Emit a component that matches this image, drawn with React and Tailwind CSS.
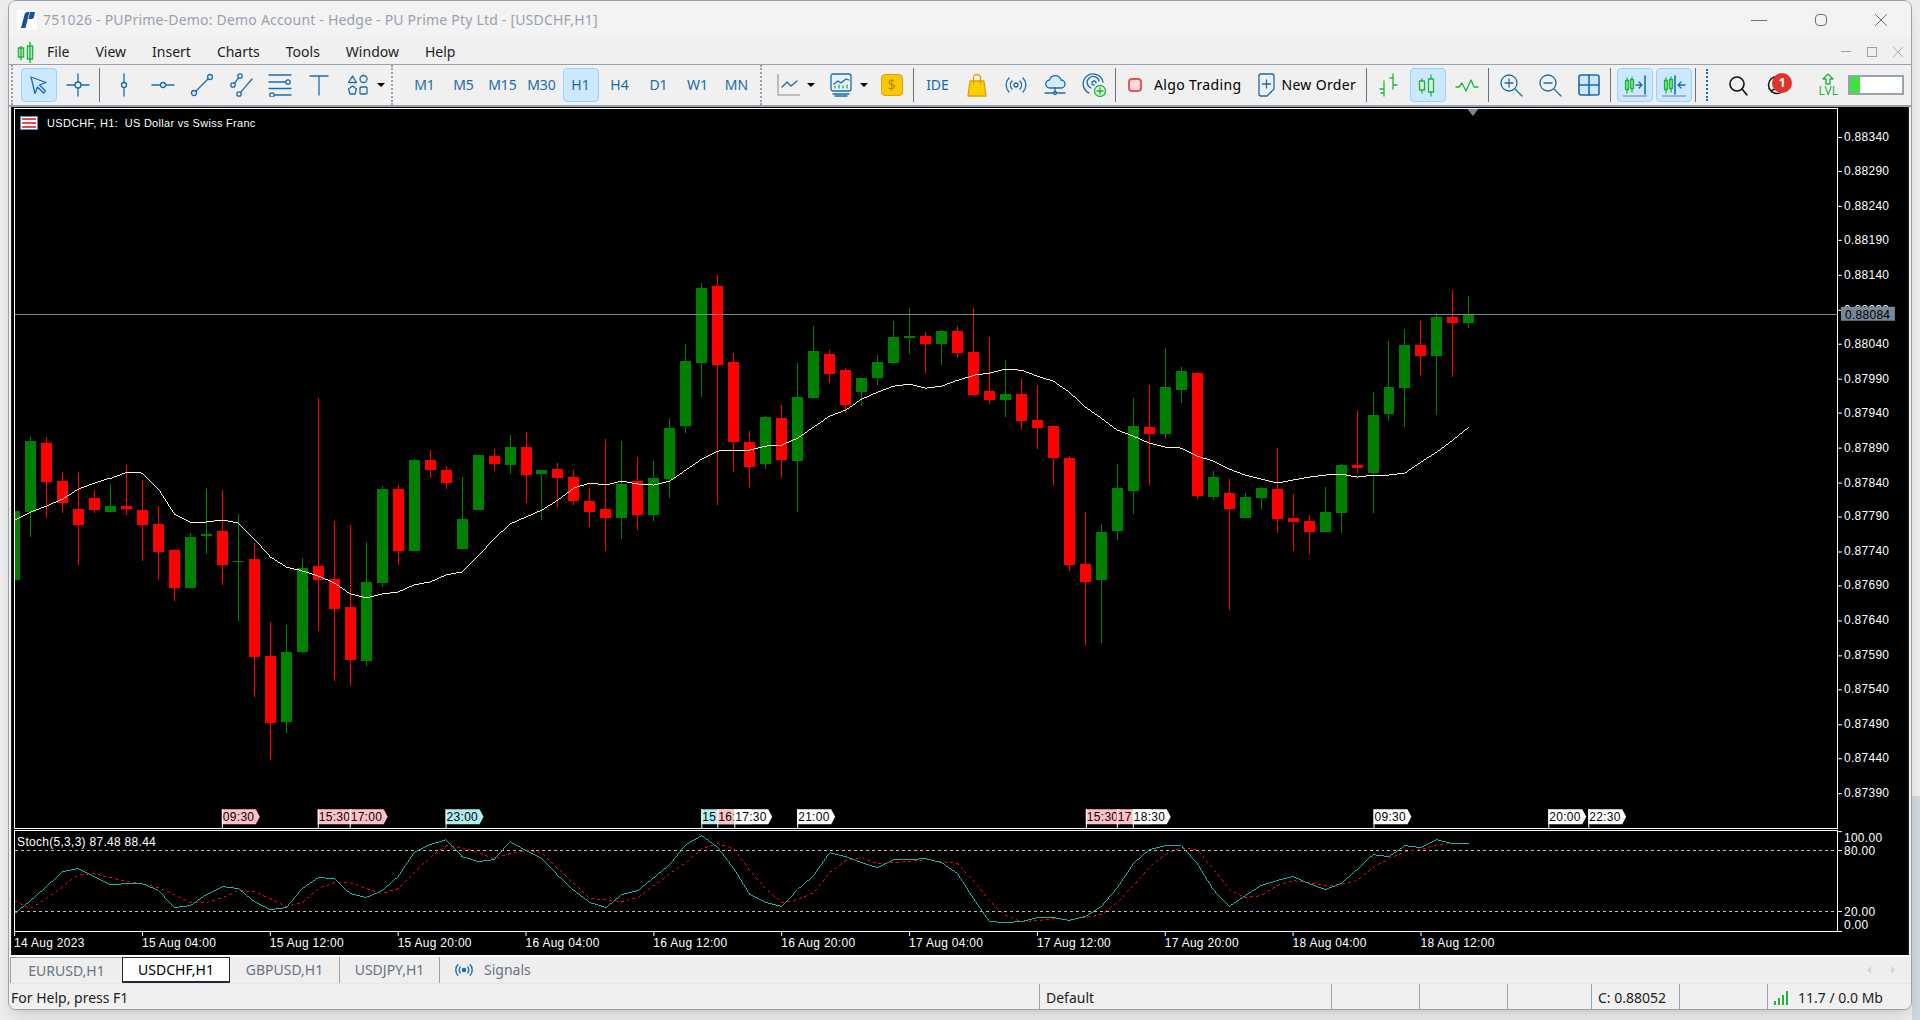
import React from "react";

const candles = [
  ["g",510,510,580,580],["g",435,440,511,537],["r",436,442,481,517],["r",471,480,502,512],["r",471,508,524,565],["r",489,497,509,512],["g",483,505,511,511],["r",464,505,508,514],["r",479,509,524,561],["r",505,523,552,580],
  ["r",549,550,588,601],["g",533,537,588,588],["g",487,534,536,554],["r",489,530,565,585],["g",513,561,562,621],["r",543,559,657,697],["r",622,656,723,760],["g",625,652,722,733],["g",558,568,652,653],["r",397,566,580,631],
  ["r",520,579,609,681],["r",524,607,660,686],["g",542,582,661,666],["g",485,488,583,587],["r",483,488,551,565],["g",458,459,551,551],["r",449,459,469,477],["r",465,469,482,488],["g",476,518,549,549],["g",454,454,509,509],
  ["r",448,455,463,470],["g",434,446,464,473],["r",431,446,474,502],["g",469,469,473,519],["r",462,468,477,506],["r",469,476,500,504],["r",487,500,511,526],["r",438,508,517,551],["g",440,483,517,539],["r",456,480,514,529],
  ["g",460,477,514,520],["g",417,427,478,497],["g",343,360,425,432],["g",282,287,362,396],["r",273,285,364,504],["r",352,361,441,471],["r",430,441,466,487],["g",415,416,463,468],["r",404,417,459,477],["g",362,396,460,511],
  ["g",325,350,397,398],["r",349,353,373,382],["r",367,369,404,412],["g",376,377,391,405],["g",354,361,377,384],["g",320,336,362,363],["g",307,335,337,353],["r",331,335,343,373],["g",329,330,343,364],["r",325,330,352,357],
  ["r",307,351,394,394],["r",336,390,399,403],["g",359,393,399,416],["r",377,393,420,429],["r",384,419,427,448],["r",424,425,457,485],["r",455,457,565,571],["r",511,564,582,646],["g",523,532,580,643],["g",463,487,530,540],
  ["g",397,425,490,513],["r",384,426,433,485],["g",347,386,433,438],["g",366,370,389,402],["r",371,372,495,498],["g",470,476,496,499],["r",478,492,508,610],["g",492,496,517,517],["g",486,487,497,509],["r",447,488,518,533],
  ["r",493,517,521,551],["r",514,520,532,554],["g",486,511,532,532],["g",463,464,512,533],["r",409,464,467,472],["g",391,414,472,512],["g",340,386,413,420],["g",328,344,387,426],["r",320,344,355,374],["g",312,316,355,414],
  ["r",289,316,322,376],["g",295,313,322,327],
];

const ma = [519,511,505,498,488,482,477,471,472,488,513,521,521,519,522,538,556,566,570,575,582,593,597,593,591,584,581,574,571,555,538,
  523,516,509,499,487,482,484,480,483,484,480,469,458,450,449,449,445,444,437,426,415,409,398,391,385,383,387,385,379,374,372,
  368,369,375,380,391,406,417,429,435,442,446,447,455,460,468,474,478,482,479,476,474,473,476,474,474,472,461,451,439,426];

const teal = [913,900,886,871,868,876,884,883,883,890,907,905,894,886,888,901,909,907,888,877,878,893,897,890,876,852,844,839,856,861,859,841,850,858,875,890,902,907,894,890,
  877,864,844,835,847,868,894,902,906,889,
  875,852,856,862,867,859,859,858,862,873,898,921,922,921,917,917,920,916,906,887,863,849,845,845,863,889,906,895,885,880,876,883,889,883,869,854,856,845,847,839,843,843];

const redLine = [900,908,898,886,874,873,877,881,883,887,894,902,902,897,890,891,898,906,902,888,882,882,888,893,888,872,857,845,847,852,858,853,850,852,868,883,898,899,901,897,
  885,873,862,848,843,848,870,888,902,899,
  892,872,860,857,863,862,861,859,861,863,880,900,915,921,920,918,919,917,914,902,885,867,854,847,849,868,889,897,895,885,880,882,885,884,880,867,858,851,849,844,843,843];

const toPts = (a) => a.map((y, k) => `${13.5 + 16 * k},${y + 0.5}`).join(" ");

const prices = ["0.88340","0.88290","0.88240","0.88190","0.88140","0.88090","0.88040","0.87990","0.87940","0.87890","0.87840","0.87790","0.87740","0.87690","0.87640","0.87590","0.87540","0.87490","0.87440","0.87390"];
const times = ["14 Aug 2023","15 Aug 04:00","15 Aug 12:00","15 Aug 20:00","16 Aug 04:00","16 Aug 12:00","16 Aug 20:00","17 Aug 04:00","17 Aug 12:00","17 Aug 20:00","18 Aug 04:00","18 Aug 12:00"];
const P = "#ffc0cb", C = "#afeeee", W = "#ffffff";
const tags = [[221,"09:30",P],[317,"15:30",P],[349,"17:00",P],[445,"23:00",C],[701,"15:00",C],[717,"16:00",P],[734,"17:30",W],[797,"21:00",W],[1086,"15:30",P],[1117,"17:00",P],[1133,"18:30",W],[1374,"09:30",W],[1549,"20:00",W],[1589,"22:30",W]];

function Chart() {
  return (
    <svg viewBox="10 106 1900 849" className="block h-full w-full font-['Liberation_Sans',sans-serif] text-xs tracking-wide">
      <rect x="10" y="106" width="1900" height="849" fill="#000" />
      <rect x="13" y="108" width="1826" height="720" fill="none" stroke="#fff" shapeRendering="crispEdges" />
      <rect x="13" y="830" width="1826" height="101" fill="none" stroke="#fff" shapeRendering="crispEdges" />

      <g shapeRendering="crispEdges">
        {candles.map(([c, hi, top, bot, lo], k) => {
          const col = c === "g" ? "#008000" : "#ff0000";
          const left = Math.max(14, 8 + 16 * k);
          const right = 19 + 16 * k;
          return (
            <g key={k}>
              {k > 0 && <rect x={13 + 16 * k} y={hi} width="1" height={lo - hi} fill={col} />}
              <rect x={left} y={top} width={right - left} height={Math.max(1, bot - top)} fill={col} />
            </g>
          );
        })}
        <polyline points={toPts(ma)} fill="none" stroke="#ffefd5" strokeWidth="1" />
        <line x1="14" x2="1839" y1="313.5" y2="313.5" stroke="#778899" />
        <line x1="14" x2="1839" y1="850.5" y2="850.5" stroke="#c0c0c0" strokeDasharray="3 3" />
        <line x1="14" x2="1839" y1="911.5" y2="911.5" stroke="#c0c0c0" strokeDasharray="3 3" />
        <polyline points={toPts(redLine)} fill="none" stroke="#ff0000" strokeWidth="1" strokeDasharray="3 3" />
        <polyline points={toPts(teal)} fill="none" stroke="#20b2aa" strokeWidth="1" />
      </g>

      <polygon points="1468,108 1479,108 1473.5,115" fill="#778899" />

      <g>
        <rect x="19.5" y="115.5" width="17" height="13" fill="#fff" stroke="#5b8fc7" />
        <rect x="21" y="117" width="14" height="2" fill="#e8474c" />
        <rect x="21" y="121" width="14" height="2" fill="#e8474c" />
        <rect x="21" y="125" width="14" height="2" fill="#e8474c" />
        <text x="46" y="126" fill="#fff" className="whitespace-pre text-[11px]">USDCHF, H1:  US Dollar vs Swiss Franc</text>
      </g>

      {prices.map((p, i) => {
        const y = Math.round(135.5 + i * 34.6);
        return (
          <g key={p}>
            <rect x="1839" y={y} width="4" height="1" fill="#fff" />
            <text x="1845" y={y + 4} fill="#fff">{p}</text>
          </g>
        );
      })}
      <rect x="1842" y="306" width="54" height="14" fill="#778899" />
      <text x="1846" y="318" fill="#000">0.88084</text>

      {tags.map(([x, t, col], i) => (
        <g key={i}>
          <polygon points={`${x},809 ${x + 34},809 ${x + 38},816.5 ${x + 34},824 ${x},824`} fill={col} />
          <rect x={x} y="809" width="1" height="19" fill="#fff" />
          <text x={x + 1} y="821" fill="#000">{t}</text>
        </g>
      ))}

      <text x="16" y="846" fill="#fff">Stoch(5,3,3) 87.48 88.44</text>
      {[[831, "100.00", 842],[850, "80.00", 855],[911, "20.00", 916],[931, "0.00", 929]].map(([y, t, b]) => (
        <g key={t}>
          <rect x="1839" y={y} width="4" height="1" fill="#fff" />
          <text x="1845" y={b} fill="#fff">{t}</text>
        </g>
      ))}
      {times.map((t, i) => {
        const x = 13 + 128 * i;
        return (
          <g key={t}>
            <rect x={x} y="931" width="1" height="5" fill="#fff" />
            <text x={x} y="947" fill="#fff">{t}</text>
          </g>
        );
      })}
    </svg>
  );
}

const B = "#1a6cad";
const G = "#1fb53a";

const Ico = ({ children, className = "h-6 w-6" }) => (
  <svg viewBox="0 0 24 24" className={className} fill="none" stroke={B} strokeWidth="1.3" strokeLinecap="round" strokeLinejoin="round">
    {children}
  </svg>
);

const Slot = ({ active, children }) => (
  <div className="flex h-full w-[39px] shrink-0 items-center justify-center">
    <div className={`flex h-8.5 w-9 items-center justify-center rounded-sm border text-sm text-[#1a6cad] ${active ? "border-[#99d1ff] bg-[#cce8ff]" : "border-transparent"}`}>
      {children}
    </div>
  </div>
);

const Sep = ({ className }) => <div className={`h-8.5 w-px shrink-0 bg-gray-500 ${className}`} />;
const Grip = ({ className }) => <div className={`h-full w-0.5 shrink-0 border-l-2 border-dotted border-gray-400 ${className}`} />;
const Caret = ({ className = "" }) => (
  <div className={`flex w-2 shrink-0 justify-center ${className}`}>
    <div className="h-0 w-0 border-x-4 border-t-4 border-x-transparent border-t-black" />
  </div>
);

const CandleIcon = ({ fill = "#d6f5dc" }) => (
  <g stroke={G} fill={fill}>
    <path d="M6 6v14M15 2v21" />
    <rect x="3.5" y="8" width="5" height="9" />
    <rect x="12.5" y="6" width="5" height="13" />
  </g>
);

const SmallCandles = () => (
  <g stroke={G} fill="#7fe08f">
    <path d="M4 5v15M9 4v15" />
    <rect x="2.5" y="7.5" width="3" height="9" />
    <rect x="7.5" y="6.5" width="3" height="9" />
  </g>
);

function Toolbar() {
  return (
    <div className="flex h-10.5 shrink-0 items-center border-b-2 border-gray-400 pl-0.5">
      <Grip className="mr-1.5" />
      <Slot active>
        <Ico><path d="M4 4l15 5.5-6.5 2.5 6 6-2 2-6-6-2.5 6.5z" /></Ico>
      </Slot>
      <Slot>
        <Ico><circle cx="12" cy="12" r="3" /><path d="M12 1v8M12 15v8M1 12h8M15 12h8" /></Ico>
      </Slot>
      <Sep className="ml-0.5 mr-1" />
      <Slot><Ico><circle cx="12" cy="12" r="2.5" /><path d="M12 1v8.5M12 14.5V23" /></Ico></Slot>
      <Slot><Ico><circle cx="12" cy="12" r="2.5" /><path d="M1 12h8.5M14.5 12H23" /></Ico></Slot>
      <Slot><Ico><circle cx="4" cy="20" r="2.5" /><circle cx="20" cy="4" r="2.5" /><path d="M5.8 18.2L18.2 5.8" /></Ico></Slot>
      <Slot><Ico><circle cx="11" cy="3" r="2.2" /><circle cx="4" cy="12" r="2.2" /><circle cx="10" cy="21" r="2.2" /><path d="M5.5 10.3L9.6 4.8M11.6 19.3L23 6" /></Ico></Slot>
      <Slot><Ico><path d="M1 2h22M1 9h16M1 15.5h22M7 22h16" /><circle cx="20" cy="9" r="2.2" /><circle cx="4" cy="22" r="2.2" /></Ico></Slot>
      <Slot><Ico><path d="M3 3h18M12 3v19" /></Ico></Slot>
      <Slot><Ico><path d="M6.5 3l4 6.5h-8z" /><circle cx="17.5" cy="6" r="3.5" /><path d="M6.5 13l4 3-1.5 5H4l-1.5-5z" /><rect x="14" y="14" width="7" height="7" rx="1" /></Ico></Slot>
      <Caret />
      <Grip className="ml-1.5 mr-3" />
      {["M1","M5","M15","M30","H1","H4","D1","W1","MN"].map((t) => (
        <Slot key={t} active={t === "H1"}>{t}</Slot>
      ))}
      <Grip className="ml-1 mr-1.5" />
      <Slot>
        <Ico>
          <path d="M2 2v20h22" stroke="#bdbdbd" strokeWidth="2" />
          <path d="M6 14l5-5 4 4 6-5" />
        </Ico>
      </Slot>
      <Caret />
      <div className="ml-1.5" />
      <Slot>
        <Ico>
          <rect x="2" y="1" width="20" height="17" rx="2" fill="#e6f3fb" />
          <path d="M5 11l4-3 3 2 5-4 3 1" />
          <path d="M6 15v-2M10 15v-3M14 15v-2M18 15v-3" stroke={G} />
          <path d="M4 21h16M6 23h12" />
        </Ico>
      </Slot>
      <Caret />
      <div className="ml-1" />
      <Slot>
        <div className="flex h-5.5 w-5.5 items-center justify-center rounded-sm border border-[#e0a100] bg-[#fcc800] text-sm text-[#b98600]">$</div>
      </Slot>
      <Sep className="ml-0.5 mr-1" />
      <Slot>IDE</Slot>
      <Slot>
        <Ico>
          <path d="M5 8h14l2 15H3z" fill="#fcd000" stroke="#e0a100" />
          <path d="M8.5 11V5a3.5 3.5 0 0 1 7 0v6" stroke="#e0a100" />
        </Ico>
      </Slot>
      <Slot>
        <Ico>
          <circle cx="12" cy="12" r="2" />
          <path d="M8 8a6 6 0 0 0 0 8M16 8a6 6 0 0 1 0 8M5 5a10 10 0 0 0 0 14M19 5a10 10 0 0 1 0 14" />
        </Ico>
      </Slot>
      <Slot>
        <Ico>
          <path d="M7 15a4 4 0 0 1-.5-8A6 6 0 0 1 18 7a4 4 0 0 1 0 8z" fill="#d5ebf8" />
          <path d="M12 15v5M2 20h8M14 20h8" />
          <circle cx="12" cy="20" r="1.5" />
        </Ico>
      </Slot>
      <Slot>
        <Ico>
          <path d="M7 20A10 10 0 1 1 21 9M9 15a6 6 0 1 1 8-7M12 12a2 2 0 1 1 2-2" />
          <circle cx="18" cy="18" r="5.5" fill="#d6f5dc" stroke={G} />
          <path d="M18 15v6M15 18h6" stroke={G} />
        </Ico>
      </Slot>
      <Sep className="ml-0.5 mr-1" />
      <div className="ml-2 h-3.5 w-3.5 shrink-0 rounded-sm border-2 border-[#e2575a] bg-[#ffd9d9]" />
      <span className="ml-3 text-sm tracking-wide whitespace-nowrap text-black">Algo Trading</span>
      <div className="ml-3.5 shrink-0">
        <Ico>
          <path d="M4 3a2 2 0 0 1 2-2h11a2 2 0 0 1 2 2v13l-7 7H6a2 2 0 0 1-2-2z" />
          <path d="M11.5 7v8M7.5 11h8" />
        </Ico>
      </div>
      <span className="ml-0.5 text-sm tracking-wide whitespace-nowrap text-black">New Order</span>
      <Sep className="ml-2.5 mr-0.5" />
      <Slot>
        <Ico>
          <g stroke={G}>
            <path d="M7 8v15M7 16H3M7 12h0M16 1v15M16 5h-3M16 12h4M7 20h-3" />
          </g>
        </Ico>
      </Slot>
      <Slot active><Ico><CandleIcon /></Ico></Slot>
      <Slot><Ico><path d="M1 14h3l3-4 4 8 5-11 3 7h4" stroke={G} /></Ico></Slot>
      <Sep className="ml-0.5 mr-0.5" />
      <Slot><Ico><circle cx="10" cy="10" r="8" /><path d="M16 16l7 7M10 6v8M6 10h8" /></Ico></Slot>
      <Slot><Ico><circle cx="10" cy="10" r="8" /><path d="M16 16l7 7M6 10h8" /></Ico></Slot>
      <Slot><Ico><rect x="2" y="2" width="20" height="20" rx="2" fill="#cfe6f6" strokeWidth="1.6" /><path d="M12 2v20M2 12h20" strokeWidth="1.6" /></Ico></Slot>
      <Sep className="ml-0.5 mr-1" />
      <Slot active>
        <Ico>
          <SmallCandles />
          <path d="M13 12h6M16 9l3 3-3 3" />
          <path d="M22 3v18" strokeWidth="1.6" />
          <path d="M0 23h24" stroke="#9aa0a6" />
        </Ico>
      </Slot>
      <Slot active>
        <Ico>
          <SmallCandles />
          <path d="M13 3v18" strokeWidth="1.6" />
          <path d="M23 12h-7M19 9l-3 3 3 3" />
          <path d="M0 23h24" stroke="#9aa0a6" />
        </Ico>
      </Slot>
      <Sep className="ml-0.5" />
      <div className="ml-2.5 h-8 w-0.5 shrink-0 border-l-2 border-dotted border-[#1a6cad]" />
      <div className="ml-2.5" />
      <Slot><Ico><g stroke="#111" strokeWidth="1.6"><circle cx="11" cy="11" r="7" /><path d="M16 16l5 6" /></g></Ico></Slot>
      <div className="relative flex h-full w-[39px] shrink-0 items-center justify-center">
        <Ico>
          <g stroke="#111" strokeWidth="1.5">
            <circle cx="12" cy="12" r="8.5" />
            <circle cx="12" cy="10" r="3" />
            <path d="M6.5 18.5c1-3.5 10-3.5 11 0" />
          </g>
        </Ico>
        <div className="absolute right-1 top-2 flex h-5 w-5 items-center justify-center rounded-full bg-[#e0342a] text-xs font-bold text-white">1</div>
      </div>
      <div className="ml-5 flex w-6 shrink-0 flex-col items-center text-[#1fb53a]">
        <svg viewBox="0 0 14 12" className="h-3 w-3.5" fill="none" stroke={G} strokeWidth="1.4" strokeLinejoin="round">
          <path d="M7 1L2 6h3v5h4V6h3z" />
        </svg>
        <span className="text-xs leading-3">LVL</span>
      </div>
      <div className="ml-2 h-5 w-14 shrink-0 border-2 border-gray-400 bg-white">
        <div className="h-full w-2.5 bg-[#40e040]" />
      </div>
    </div>
  );
}

export default function App() {
  return (
    <div className="relative flex h-screen w-screen overflow-hidden bg-[#ededed] pb-2.5 pl-2 pr-2 font-['Noto_Sans',sans-serif] text-sm text-black">
      <div className="absolute bottom-0 right-0 h-56 w-2 bg-gray-300" />
      <div className="relative flex min-w-0 flex-1 flex-col overflow-hidden rounded-lg border border-gray-400 bg-[#f0f0f0] shadow-lg">
        <div className="flex h-9 shrink-0 items-center bg-[#f3f3f3] pt-0.5">
          <div className="ml-2 flex h-5 w-5 shrink-0 items-center justify-center bg-white">
            <svg viewBox="0 0 20 20" className="h-5 w-5">
              <path d="M4 18L7.5 4.5C8 2.8 9 2 11 2h1.5L8.5 18zM13 2h5l-1 5c-.3 1.3-1 2-2.5 2h-3z" fill="#1a4fa0" />
            </svg>
          </div>
          <span className="ml-1.5 text-sm tracking-[0.2px] whitespace-nowrap text-gray-400">751026 - PUPrime-Demo: Demo Account - Hedge - PU Prime Pty Ltd - [USDCHF,H1]</span>
          <div className="ml-auto flex items-center gap-12 pr-6 text-gray-500">
            <div className="h-px w-4 bg-gray-500" />
            <div className="h-3 w-3 rounded-sm border border-gray-500" />
            <svg viewBox="0 0 12 12" className="h-3 w-3" stroke="currentColor"><path d="M0 0l12 12M12 0L0 12" /></svg>
          </div>
        </div>
        <div className="flex h-7 shrink-0 items-center border-b border-gray-400 pt-0.5">
          <svg viewBox="0 0 24 24" className="ml-1.5 h-6 w-6" fill="none" strokeWidth="1.5">
            <CandleIcon fill="none" />
          </svg>
          <div className="ml-2 flex gap-6.5 text-sm text-[#222]">
            {["File","View","Insert","Charts","Tools","Window","Help"].map((m) => <span key={m}>{m}</span>)}
          </div>
          <div className="ml-auto flex items-center gap-4 pr-2 text-gray-400">
            <div className="h-px w-2.5 bg-gray-400" />
            <div className="h-2.5 w-2.5 border border-gray-400" />
            <svg viewBox="0 0 12 12" className="h-2.5 w-2.5" stroke="currentColor"><path d="M0 0l12 12M12 0L0 12" /></svg>
          </div>
        </div>
        <Toolbar />
        <div className="mx-px min-h-0 flex-1">
          <Chart />
        </div>
        <div className="flex h-7 shrink-0 items-stretch border-t-2 border-white bg-[#eeeeee] text-sm text-gray-500">
          <div className="ml-px flex w-28 items-center justify-center border-l border-t border-gray-400">EURUSD,H1</div>
          <div className="flex w-27 items-center justify-center border-x border-b-2 border-t border-gray-800 bg-white text-black">USDCHF,H1</div>
          <div className="flex w-27.5 items-center justify-center border-r border-gray-400">GBPUSD,H1</div>
          <div className="flex w-25 items-center justify-center border-r border-gray-400">USDJPY,H1</div>
          <div className="ml-3.5 flex items-center gap-2.5">
            <svg viewBox="0 0 24 24" className="h-5 w-5" fill="none" stroke={B} strokeWidth="1.6">
              <circle cx="12" cy="12" r="2" fill={B} />
              <path d="M8 8a6 6 0 0 0 0 8M16 8a6 6 0 0 1 0 8M5 5a10 10 0 0 0 0 14M19 5a10 10 0 0 1 0 14" />
            </svg>
            Signals
          </div>
          <div className="ml-auto flex items-center gap-5 pr-4">
            <div className="h-0 w-0 border-y-4 border-r-4 border-y-transparent border-r-gray-300" />
            <div className="h-0 w-0 border-y-4 border-l-4 border-y-transparent border-l-gray-300" />
          </div>
        </div>
        <div className="flex h-6.5 shrink-0 items-stretch border-t border-gray-200 bg-[#f0f0f0] text-sm text-[#222]">
          <div className="flex min-w-0 flex-1 items-center pl-0.5 pt-0.5">For Help, press F1</div>
          <div className="flex w-73 items-center border-l border-gray-400 pl-1.5 pt-0.5">Default</div>
          <div className="w-22 border-l border-gray-400" />
          <div className="w-22 border-l border-gray-400" />
          <div className="w-21 border-l border-gray-400" />
          <div className="flex w-22 items-center border-l border-gray-400 pl-1.5 pt-0.5">C: 0.88052</div>
          <div className="w-22 border-l border-gray-400" />
          <div className="relative flex w-36 items-center gap-2.5 border-l border-gray-400 pl-1.5 pt-0.5">
            <svg viewBox="0 0 14 14" className="h-3.5 w-3.5" fill={G}>
              <rect x="0" y="10" width="2" height="4" /><rect x="4" y="7" width="2" height="7" /><rect x="8" y="4" width="2" height="10" /><rect x="12" y="0" width="2" height="14" />
            </svg>
            <span className="whitespace-nowrap">11.7 / 0.0 Mb</span>
          </div>
        </div>
      </div>
    </div>
  );
}
